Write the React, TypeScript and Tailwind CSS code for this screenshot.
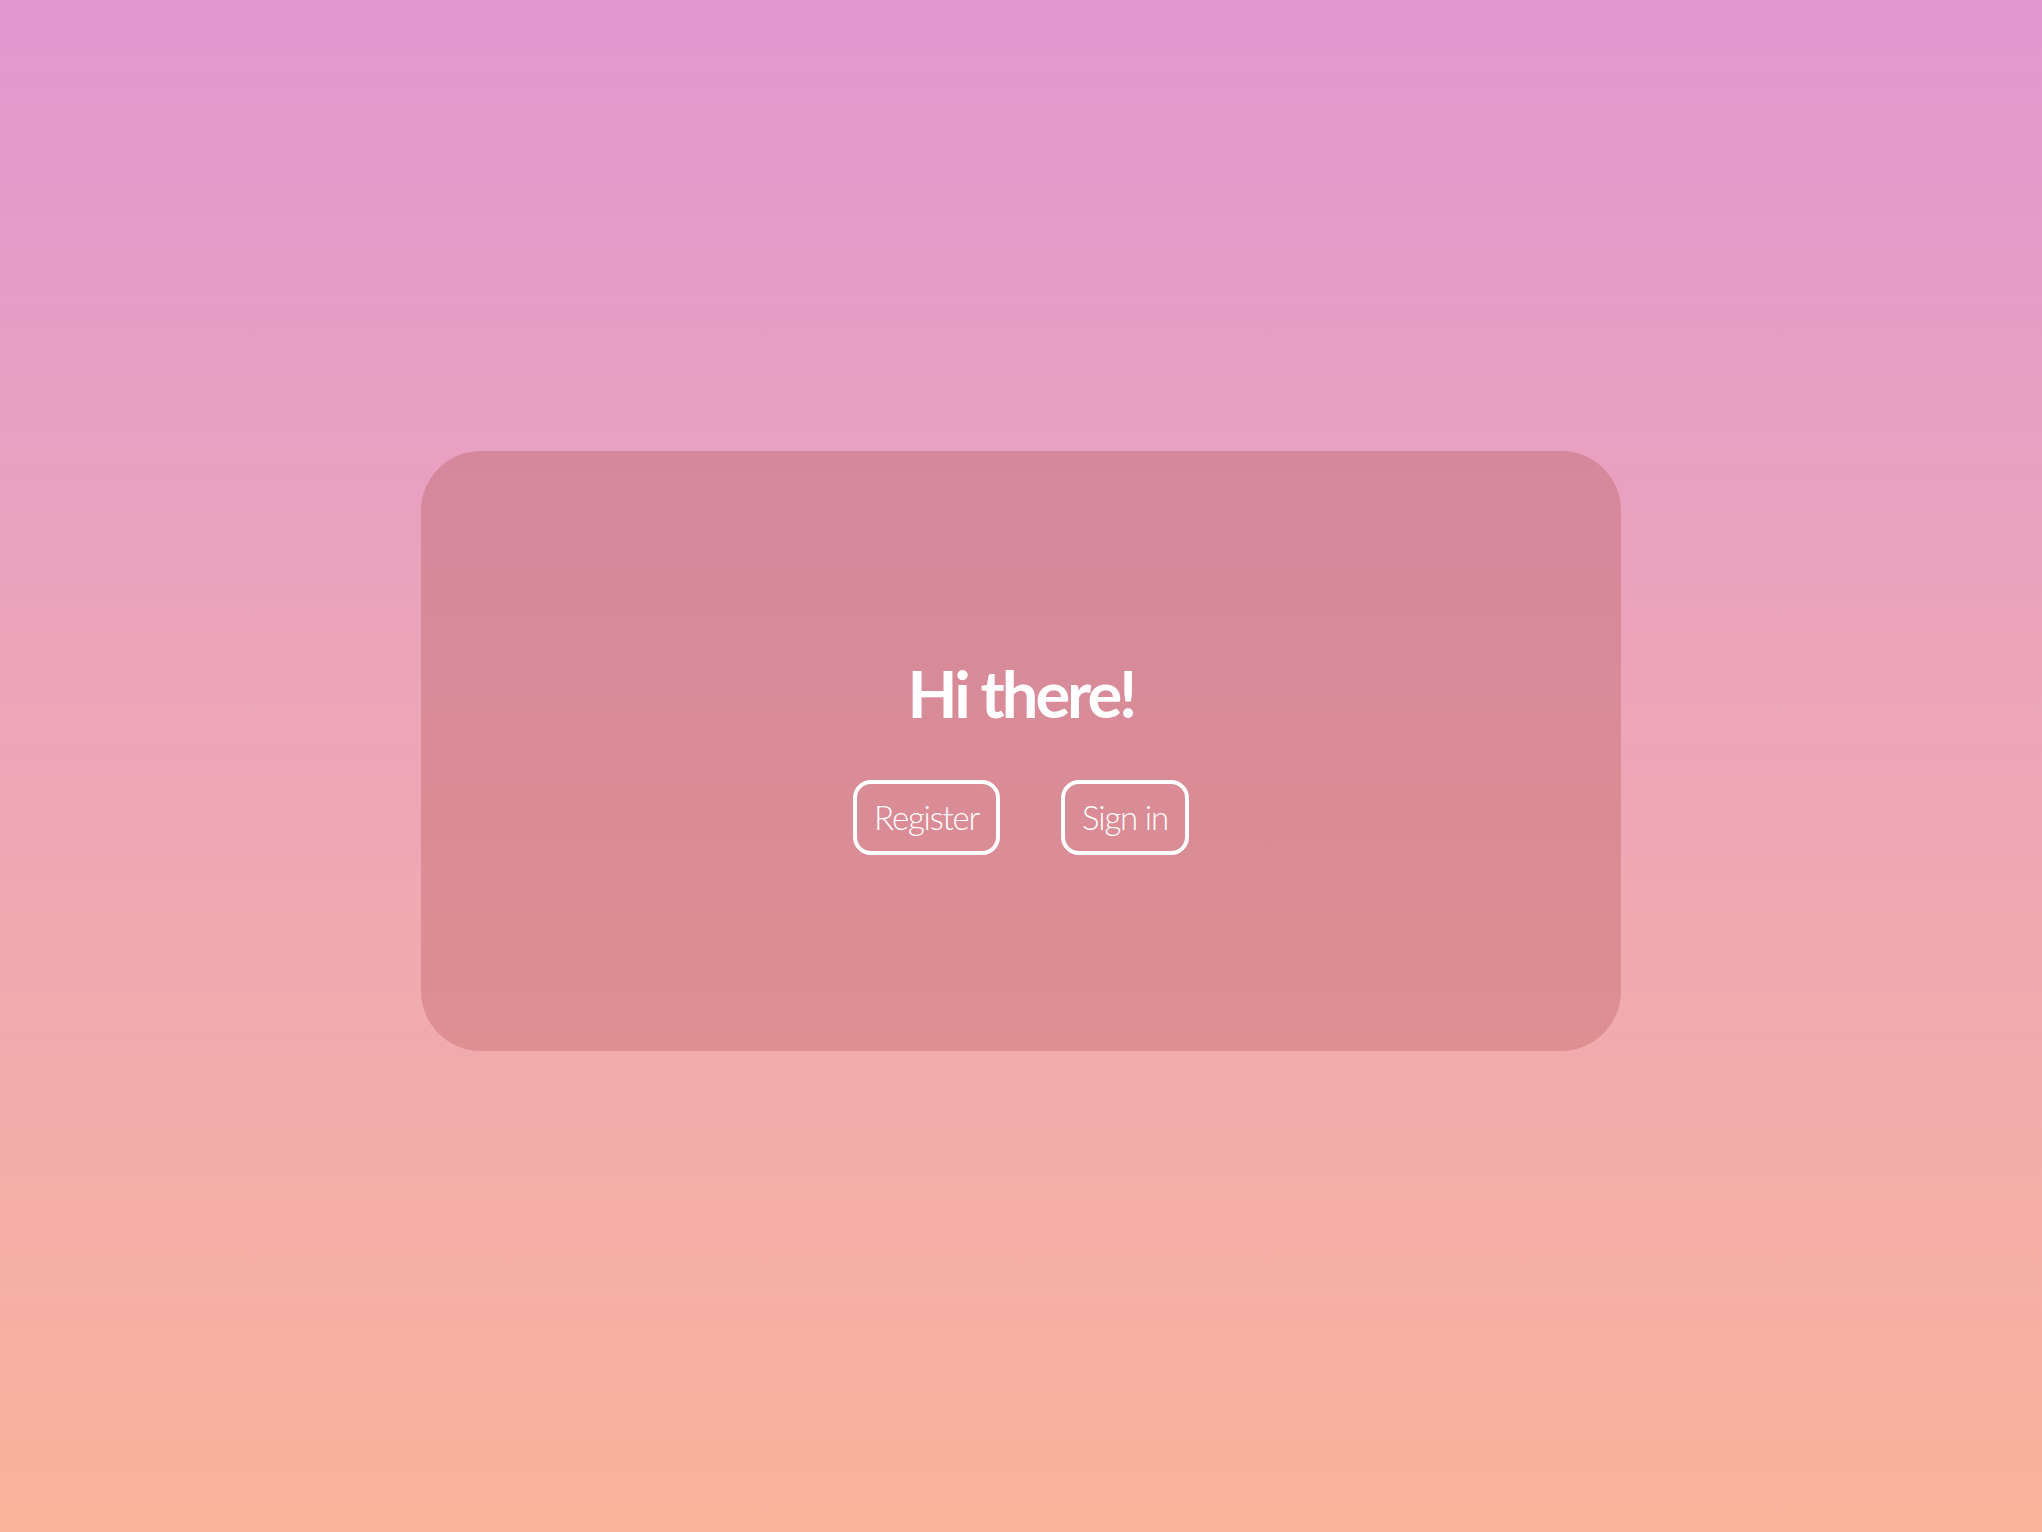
export default function App() {
  return (
    <div className="min-h-screen w-full bg-gradient-to-b from-[#e297d0] via-[#eea6b6] to-[#f9b49b] flex flex-col items-center pt-[451px] font-['Lato','Noto_Sans',sans-serif]">
      <div className="w-[1200px] h-[600px] rounded-[60px] bg-gradient-to-b from-[#d5889c] to-[#dd8f92] flex flex-col items-center justify-center pb-[20px]">
        <h1 className="text-[65px] font-bold text-white leading-none tracking-[-3px] mt-[34px]">
          Hi there!
        </h1>
        <div className="flex items-center gap-[61px] mt-[54px]">
          <button className="h-[75px] px-[17px] rounded-[18px] border-[4px] border-white text-white text-[33px] font-light leading-none tracking-[-1.2px]">
            Register
          </button>
          <button className="h-[75px] px-[17px] rounded-[18px] border-[4px] border-white text-white text-[33px] font-light leading-none tracking-[-1.2px]">
            Sign in
          </button>
        </div>
      </div>
    </div>
  );
}
